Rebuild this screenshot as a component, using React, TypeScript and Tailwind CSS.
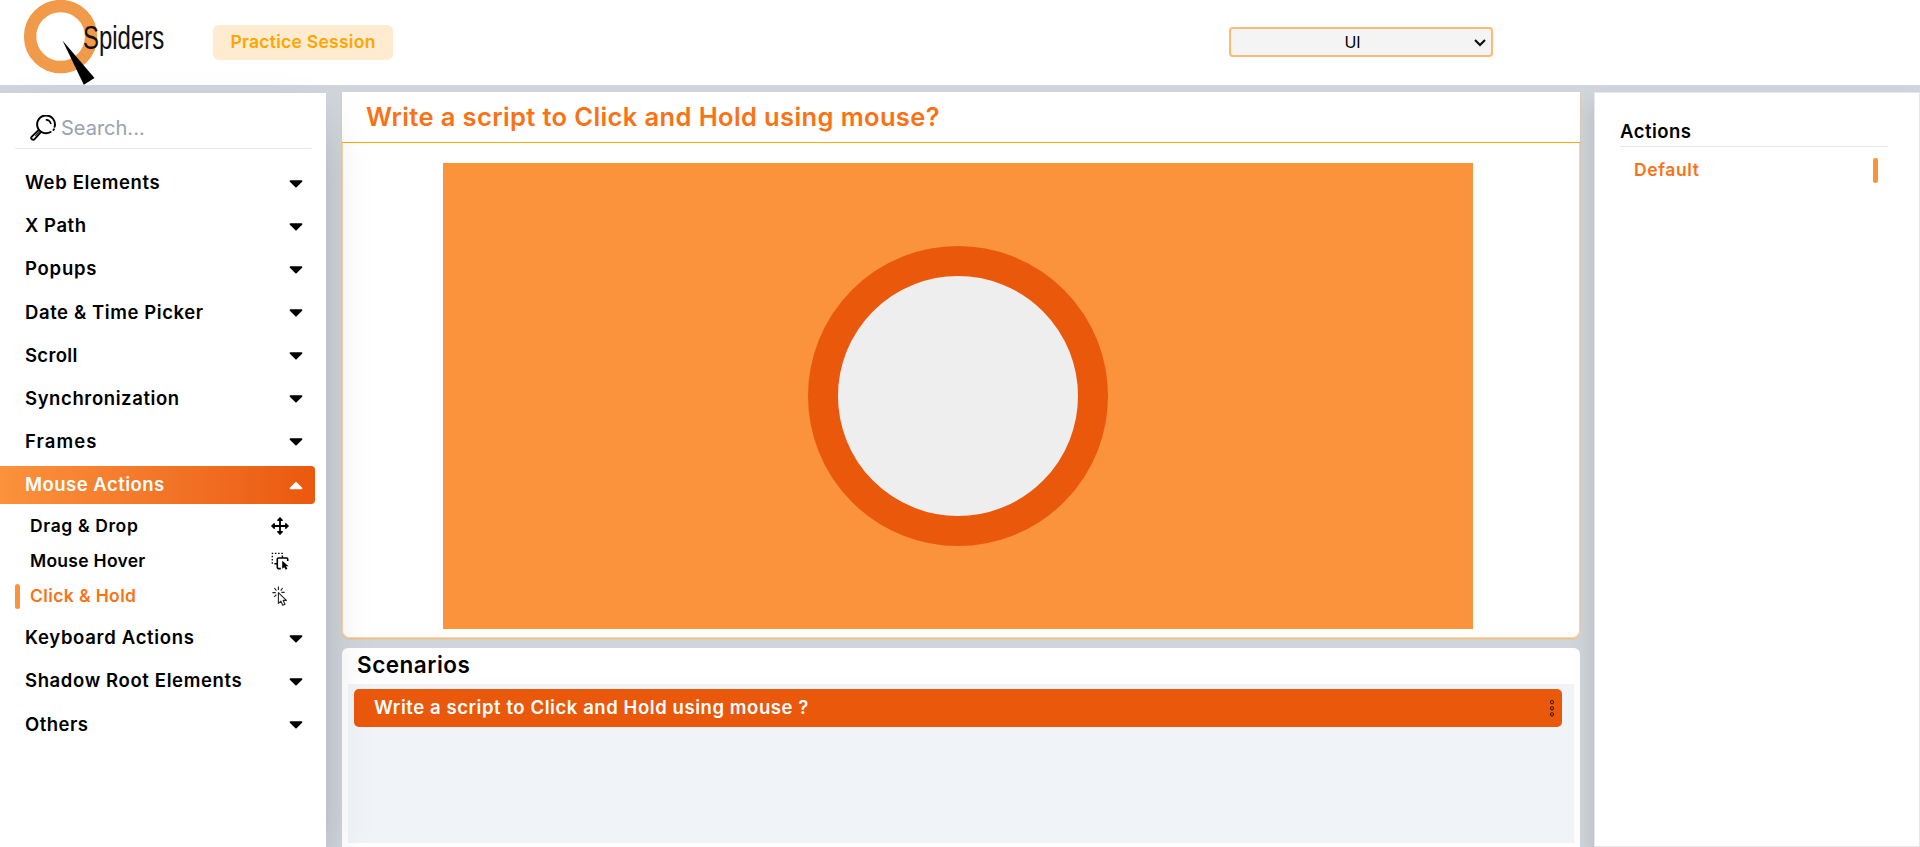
import { FaCaretDown, FaCaretUp } from "react-icons/fa";

type MenuItem = { label: string; tracking: string };

const topItems: MenuItem[] = [
  { label: "Web Elements", tracking: "tracking-[0.66px]" },
  { label: "X Path", tracking: "tracking-[0.56px]" },
  { label: "Popups", tracking: "tracking-[0.76px]" },
  { label: "Date & Time Picker", tracking: "tracking-[0.59px]" },
  { label: "Scroll", tracking: "tracking-[0.32px]" },
  { label: "Synchronization", tracking: "tracking-[0.6px]" },
  { label: "Frames", tracking: "tracking-[1.08px]" },
];

const bottomItems: MenuItem[] = [
  { label: "Keyboard Actions", tracking: "tracking-[0.69px]" },
  { label: "Shadow Root Elements", tracking: "tracking-[0.63px]" },
  { label: "Others", tracking: "tracking-[0.46px]" },
];

function Logo() {
  return (
    <svg width="160" height="86" viewBox="0 0 160 86" className="ml-[22px] shrink-0 overflow-visible">
      <circle cx="38.6" cy="36.5" r="30.5" fill="none" stroke="#f09a4a" strokeWidth="12.4" />
      <path d="M40.5 40.5 L72.5 78 L61.8 84.8 Z" fill="#000" />
      <g transform="translate(61 49) scale(0.7 1)">
        <text
          fontFamily="'Liberation Sans Narrow', 'Liberation Sans', sans-serif"
          fontSize="34"
          textLength="116"
          lengthAdjust="spacingAndGlyphs"
          fill="#111"
        >
          Spiders
        </text>
      </g>
    </svg>
  );
}

function SearchIcon() {
  return (
    <svg width="26" height="26" viewBox="0 0 26 26" fill="none" stroke="#000" strokeLinecap="round">
      <path d="M20.6 17 A8.9 8.9 0 1 1 24.6 11.8" strokeWidth="2" />
      <path d="M24 14.2 A8.9 8.9 0 0 1 23.4 15" strokeWidth="1.8" />
      <path d="M16.4 4.9 A5 5 0 0 1 20.8 8.4" strokeWidth="1.6" />
      <path d="M8.8 15 L1.8 21.6 A1.8 1.8 0 0 0 4.6 24.2 L10.8 17.2" strokeWidth="1.9" />
      <path d="M9 17.2 L5.6 20.6" strokeWidth="1" />
    </svg>
  );
}

function MoveIcon() {
  return (
    <svg width="18" height="18" viewBox="0 0 18 18" fill="none" stroke="#000" strokeWidth="1.8" strokeLinecap="round" strokeLinejoin="round">
      <path d="M9 1.5V16.5M1.5 9H16.5" />
      <path fill="#000" strokeWidth="1.4" d="M6.8 3.2 9 1 11.2 3.2ZM6.8 14.8 9 17 11.2 14.8ZM3.2 6.8 1 9 3.2 11.2ZM14.8 6.8 17 9 14.8 11.2Z" />
    </svg>
  );
}

function HoverIcon() {
  return (
    <svg width="18" height="18" viewBox="0 0 18 18" fill="none" stroke="#000">
      <path d="M.7 1.3H12" strokeWidth="1.3" strokeDasharray="1.5 1.7" />
      <path d="M1.3 3.8V12.6" strokeWidth="1.3" strokeDasharray="1.5 1.7" />
      <path d="M11.4 3.6V6M3.4 11.8H6" strokeWidth="1.4" />
      <path d="M9.8 16.6H7.3Q6.3 16.6 6.3 15.6V7Q6.3 6 7.3 6H15.7Q16.7 6 16.7 7V9" strokeWidth="1.6" />
      <path d="M11.2 8.8V16.8L13.2 15.2 14.8 17.8 16.4 16.8 15 14.2H17.6Z" fill="#000" stroke="none" />
    </svg>
  );
}

function ClickIcon() {
  return (
    <svg width="16" height="20" viewBox="0 0 16 20" fill="none" stroke="#222">
      <path d="M6.4.4V4M2.4 2 4.4 4.6M10.6 2 8.7 4.6M.4 6.6H3.8M9.4 6.4H12.6M2.2 10.8 4.4 8.6" strokeWidth="1.1" />
      <path d="M6.4 6.6V17.4L8.9 15.2 10.8 19.3 13 18.2 11.2 14.4H14.4Z" strokeWidth="1.1" strokeLinejoin="round" />
    </svg>
  );
}

function MenuRow({ label, tracking }: MenuItem) {
  return (
    <li className="flex h-[38px] items-center justify-between pr-3 pl-[25px]">
      <span className={tracking}>{label}</span>
      <FaCaretDown className="mb-px h-[22px] w-[14px]" />
    </li>
  );
}

export default function App() {
  return (
    <div className="flex h-[847px] w-full flex-col overflow-hidden bg-[#d0d4db] font-['Inter','Open_Sans',sans-serif] text-black">
      <header className="flex h-[85px] shrink-0 items-start bg-white">
        <Logo />
        <button className="mt-[25px] ml-[31px] h-[35px] w-[180px] rounded-md bg-[#ffebd0] text-[17.5px] font-semibold tracking-[0.27px] whitespace-nowrap text-[#ffa500]">
          Practice Session
        </button>
        <div className="relative mt-[27px] ml-[836px] h-[30px] w-[264px]">
          <select className="h-full w-full appearance-none rounded border-2 border-[#fdba74] bg-[#f4f4f4] pr-[17px] text-center text-[16px]">
            <option>UI</option>
          </select>
          <svg className="pointer-events-none absolute top-3 right-[7px]" width="12" height="8" viewBox="0 0 12 8" fill="none" stroke="#111" strokeWidth="2.2">
            <path d="M1 1 6 6 11 1" />
          </svg>
        </div>
      </header>

      <div className="flex min-h-0 flex-1">
        <aside className="relative z-10 mt-2 w-[326px] shrink-0 bg-white pr-[11px] text-[18.5px] font-semibold shadow-2xl">
          <div className="mr-1 ml-[15px] flex h-[56px] items-center gap-[5px] border-b border-gray-200 pt-[15px] pl-[15px]">
            <SearchIcon />
            <span className="text-[20px] font-normal text-gray-400">Search...</span>
          </div>
          <ul className="mt-[15px] flex flex-col gap-[5.15px]">
            {topItems.map((item) => (
              <MenuRow key={item.label} {...item} />
            ))}
            <li>
              <div className="flex h-[38px] items-center justify-between rounded-r bg-linear-to-r from-[#fb923c] to-[#ea580c] pr-3 pl-[25px] text-white">
                <span className="tracking-[0.48px]">Mouse Actions</span>
                <FaCaretUp className="h-[22px] w-[14px]" />
              </div>
              <ul className="mt-[5px] text-[17.5px]">
                <li className="flex h-[35px] items-center justify-between pr-[26px] pl-[30px]">
                  <span className="tracking-[0.62px]">Drag &amp; Drop</span>
                  <MoveIcon />
                </li>
                <li className="flex h-[35px] items-center justify-between pr-[26px] pl-[30px]">
                  <span className="tracking-[0.28px]">Mouse Hover</span>
                  <HoverIcon />
                </li>
                <li className="flex h-[35px] items-center pr-[27px] pl-[15px] text-[#f97316]">
                  <span className="mr-[10px] h-[25px] w-[5px] rounded-sm bg-[#fb923c]" />
                  <span className="flex-1 tracking-[0.38px]">Click &amp; Hold</span>
                  <ClickIcon />
                </li>
              </ul>
            </li>
            {bottomItems.map((item) => (
              <MenuRow key={item.label} {...item} />
            ))}
          </ul>
        </aside>

        <main className="mt-[7px] ml-4 flex w-[1238px] shrink-0 flex-col">
          <section className="flex h-[546px] shrink-0 flex-col rounded-b-lg bg-white shadow-[0_1px_2px_#f9b76c]">
            <h1 className="h-[51px] shrink-0 border-b border-[#ffa500] bg-white pl-6 text-[25.5px] leading-[50px] font-semibold tracking-[0.38px] text-[#f97316]">
              Write a script to Click and Hold using mouse?
            </h1>
            <div className="flex flex-1 justify-center rounded-b-lg border border-t-0 border-[#fdd6a8] pt-5 pr-1.5">
              <div className="flex h-[466px] w-[1030px] items-center justify-center bg-[#fb923c]">
                <div className="size-[300px] rounded-full border-[30px] border-[#ea580c] bg-[#eee]" />
              </div>
            </div>
          </section>

          <section className="mt-[10px] flex flex-1 flex-col rounded-t-md bg-white px-1.5 pb-1">
            <h2 className="h-9 shrink-0 pl-[9px] text-[22.5px] leading-[34px] font-semibold tracking-[0.5px]">
              Scenarios
            </h2>
            <div className="flex-1 bg-[#f0f3f8] pt-[5px] pr-3 pl-1.5">
              <div className="flex h-[38px] items-center justify-between rounded-[5px] bg-[#ea580c] pr-2 pl-5 text-[18.5px] font-semibold text-white">
                <span className="tracking-[0.57px]">Write a script to Click and Hold using mouse ?</span>
                <svg width="4" height="17" viewBox="0 0 4 17" fill="none" stroke="#1c0d05">
                  <rect x=".6" y=".6" width="2.8" height="3" rx=".8" />
                  <rect x=".6" y="6.8" width="2.8" height="3" rx=".8" />
                  <rect x=".6" y="12.9" width="2.8" height="3" rx=".8" />
                </svg>
              </div>
            </div>
          </section>
        </main>

        <aside className="mt-[7px] ml-3.5 flex-1 border border-gray-200 bg-white pt-[25px] pr-[31px] pl-[25px] font-semibold shadow-[-4px_12px_18px_rgba(0,0,0,0.1)]">
          <h3 className="h-[29px] border-b border-gray-200 text-[18.5px] leading-[26px] tracking-[0.48px]">Actions</h3>
          <div className="mt-[11px] flex h-[25px] items-center justify-between pr-2.5 pl-[14px] text-[17.5px] text-[#f97316]">
            <span className="tracking-[0.6px]">Default</span>
            <span className="h-[25px] w-[5px] rounded-sm bg-[#fb923c]" />
          </div>
        </aside>
      </div>
    </div>
  );
}
